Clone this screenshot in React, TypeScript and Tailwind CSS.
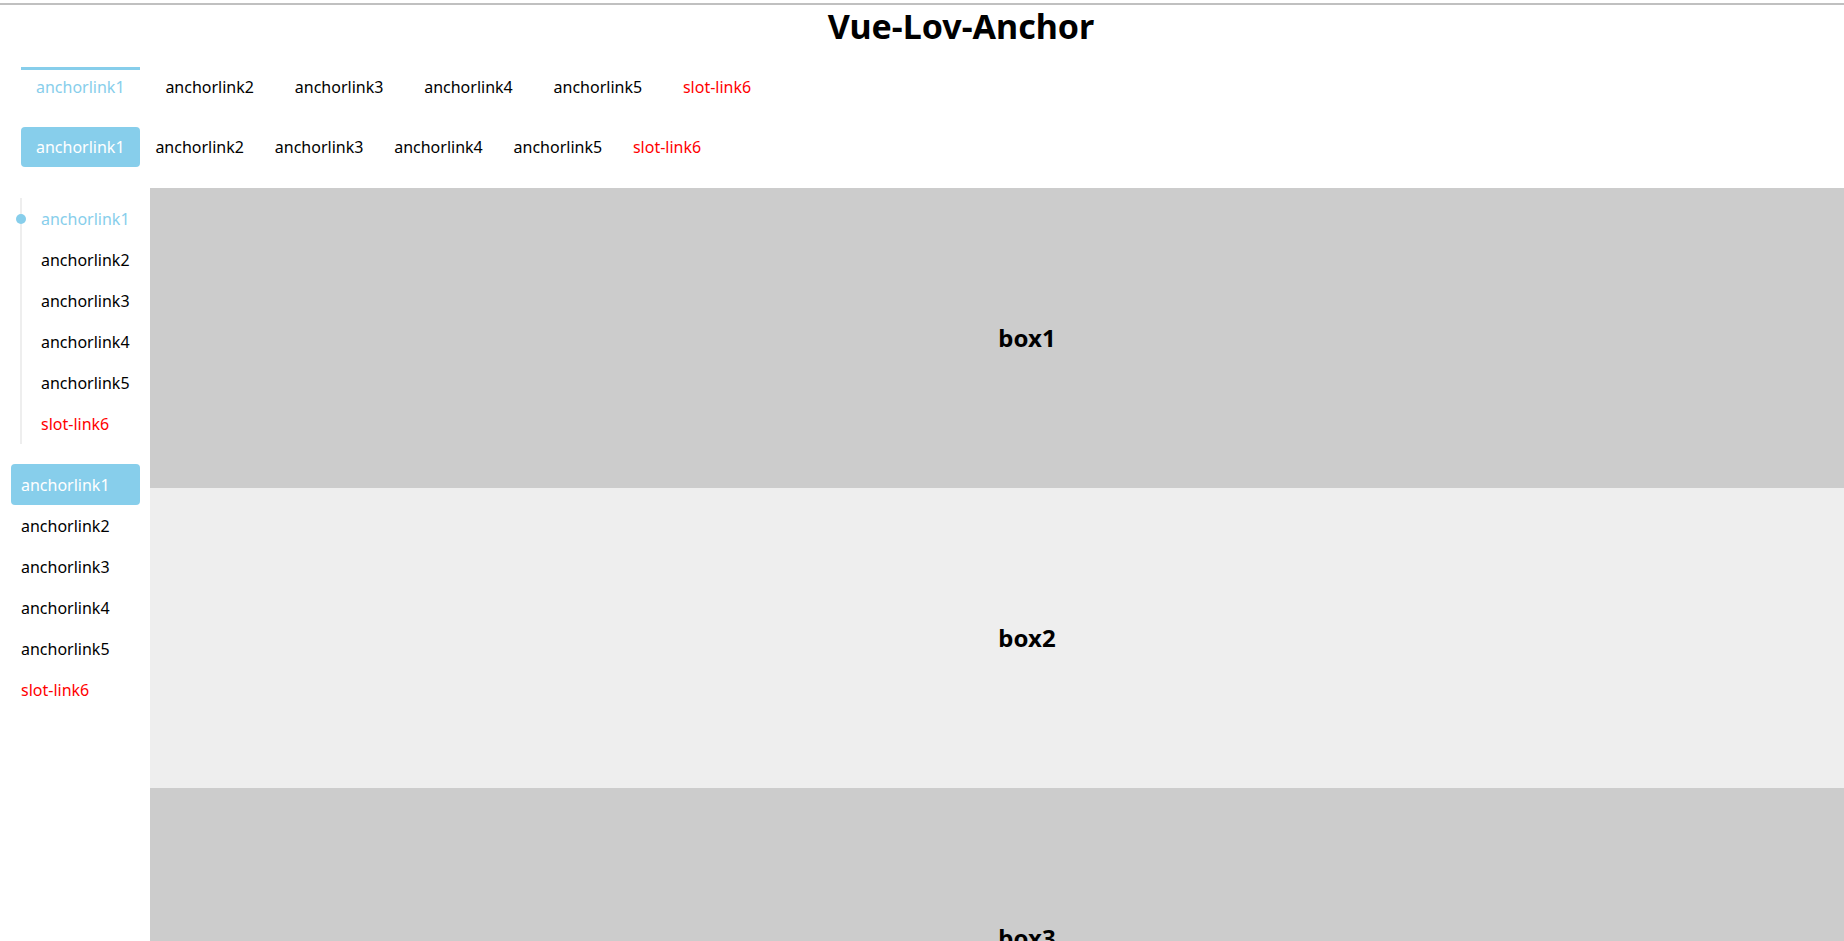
import React from 'react';

const links = ['anchorlink1', 'anchorlink2', 'anchorlink3', 'anchorlink4', 'anchorlink5', 'slot-link6'];

const linkColor = (i: number, active: boolean) =>
  active ? 'text-[#87ceeb]' : i === 5 ? 'text-[#ff0000]' : 'text-black';

const App: React.FC = () => {
  const boxes = [
    { label: 'box1', bg: 'bg-[#cccccc]' },
    { label: 'box2', bg: 'bg-[#eeeeee]' },
    { label: 'box3', bg: 'bg-[#cccccc]' },
  ];

  return (
    <div className="h-[941px] w-full overflow-hidden bg-white" style={{ fontFamily: '"Noto Sans", "Open Sans", sans-serif' }}>
      <div className="w-[1904px]">
        {/* top rule */}
        <div className="pt-[3px]">
          <div className="h-[2px] bg-[#c0c0c0]" />
        </div>

        {/* title */}
        <div className="h-[42px] flex items-center justify-center pl-[18px]">
          <h1 className="text-[34px] font-bold leading-none text-black">Vue-Lov-Anchor</h1>
        </div>

        {/* tabs, underline style */}
        <div className="mt-[20px] ml-[21px] flex gap-[10.4px]">
          {links.map((l, i) => (
            <div
              key={l}
              className={`w-[119px] h-[37px] pl-[15px] flex items-center text-[16px] border-t-[3px] ${i === 0 ? 'border-[#87ceeb]' : 'border-transparent'} ${linkColor(i, i === 0)}`}
            >
              {l}
            </div>
          ))}
        </div>

        {/* tabs, pill style */}
        <div className="mt-[23px] ml-[21px] flex">
          {links.map((l, i) => (
            <div
              key={l}
              className={`w-[119.4px] h-[40px] pl-[15px] flex items-center text-[16px] rounded-[4px] ${i === 0 ? 'bg-[#87ceeb] text-white' : linkColor(i, false)}`}
            >
              {l}
            </div>
          ))}
        </div>

        {/* body */}
        <div className="mt-[21px] flex">
          <aside className="w-[150px] shrink-0 pt-[10px]">
            {/* line style list */}
            <div className="relative ml-[20px] border-l-2 border-[#eeeeee]">
              {links.map((l, i) => (
                <div key={l} className={`relative h-[41px] pl-[19px] flex items-center text-[16px] ${linkColor(i, i === 0)}`}>
                  {i === 0 && <span className="absolute left-[-6px] top-[15.5px] w-[10px] h-[10px] rounded-full bg-[#87ceeb]" />}
                  {l}
                </div>
              ))}
            </div>

            {/* pill style list */}
            <div className="mt-[20px] ml-[11px] w-[129px]">
              {links.map((l, i) => (
                <div
                  key={l}
                  className={`h-[41px] px-[10px] flex items-center text-[16px] rounded-[4px] ${i === 0 ? 'bg-[#87ceeb] text-white' : linkColor(i, false)}`}
                >
                  {l}
                </div>
              ))}
            </div>
          </aside>

          <main className="flex-1">
            {boxes.map((b) => (
              <div key={b.label} className={`h-[300px] flex items-center justify-center ${b.bg}`}>
                <span className="text-[24px] font-bold text-black">{b.label}</span>
              </div>
            ))}
          </main>
        </div>
      </div>
    </div>
  );
};

export default App;
